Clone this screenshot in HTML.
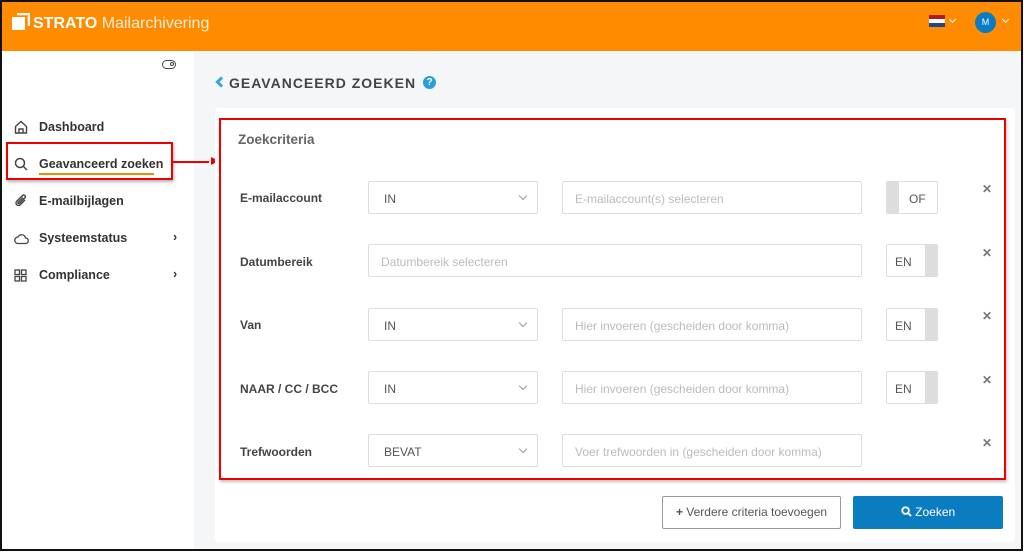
<!DOCTYPE html>
<html><head><meta charset="utf-8"><style>
*{box-sizing:border-box;margin:0;padding:0}
body{width:1024px;height:557px;background:#fff;font-family:"Liberation Sans",sans-serif;position:relative;overflow:hidden}
.frame{position:absolute;left:0;top:0;width:1023px;height:551px;border:2px solid #111;background:#f5f6f8;overflow:hidden}
.hdr{position:absolute;left:0;top:0;right:0;height:49px;background:#ff8c00}
.a{position:absolute}
.side{position:absolute;left:0;top:49px;width:192px;bottom:0;background:#fff}
.nav{position:absolute;left:37px;font-size:12.5px;color:#333;font-weight:bold}
.ic{position:absolute;left:12px}
.card{position:absolute;left:213px;top:106px;width:800px;height:434px;background:#fff;border-radius:4px}
.lab{position:absolute;left:238px;font-size:12px;font-weight:bold;color:#444}
.sel,.inp,.tog{position:absolute;height:33px;border:1px solid #ddd;border-radius:2px;background:#fff;font-size:12px}
.sel{left:366px;width:170px;color:#555;padding:10px 0 0 15px}
.sel:after{content:"";position:absolute;right:11px;top:11px;width:5px;height:5px;border-right:1px solid #999;border-bottom:1px solid #999;transform:rotate(45deg)}
.inp{color:#bbb;padding:10px 0 0 12px}
.tog{left:884px;width:52px;color:#555;overflow:hidden}
.tog .k{position:absolute;top:0;bottom:0;width:12px;background:#ddd}
.tog .t{position:absolute;top:10px}
.x{position:absolute;left:980px;font-size:12px;color:#777;font-weight:bold}
</style></head><body>
<div class="frame">
<div class="hdr">
 <svg class="a" style="left:10px;top:11px" width="18" height="17" viewBox="0 0 18 17"><rect x="0" y="4" width="13" height="13" fill="#fff"/><path d="M5 1h12v12" stroke="#fff" stroke-width="2.5" fill="none"/></svg>
 <div class="a" style="left:31px;top:13px;color:#fff;font-size:16px"><b>STRATO</b> <span style="opacity:.85">Mailarchivering</span></div>
 <div class="a" style="left:927px;top:13px;width:16px;height:12px"><div style="height:4px;background:#ae1c28"></div><div style="height:4px;background:#fff"></div><div style="height:4px;background:#21468b"></div></div>
 <div class="a" style="left:948px;top:15px;width:5px;height:5px;border-right:1.5px solid #fff;border-bottom:1.5px solid #fff;transform:rotate(45deg)"></div>
 <div class="a" style="left:973px;top:10px;width:21px;height:21px;border-radius:50%;background:#0a7cc4;color:#fff;font-size:9px;text-align:center;line-height:21px">M</div>
 <div class="a" style="left:1001px;top:15px;width:5px;height:5px;border-right:1.5px solid #fff;border-bottom:1.5px solid #fff;transform:rotate(45deg)"></div>
</div>
<div class="side">
 <div class="a" style="left:160px;top:9px;width:14px;height:9px;border:1.5px solid #444;border-radius:5px"><div style="position:absolute;right:1px;top:1px;width:4px;height:4px;border:1px solid #444;border-radius:50%"></div></div>
 <svg class="ic" style="top:69px" width="14" height="14" viewBox="0 0 14 14" fill="none" stroke="#444" stroke-width="1.4"><path d="M1.5 6.5L7 1.5l5.5 5V13h-11z"/><path d="M5 13V9h4v4"/></svg>
 <div class="nav" style="top:69px">Dashboard</div>
 <svg class="ic" style="top:106px" width="14" height="14" viewBox="0 0 14 14" fill="none" stroke="#444" stroke-width="1.5"><circle cx="6" cy="6" r="4.5"/><path d="M9.5 9.5L13 13"/></svg>
 <div class="nav" style="top:106px">Geavanceerd zoeken</div>
 <div class="a" style="left:37px;top:122px;width:115px;height:2px;background:#f08c00"></div>
 <div class="a" style="left:4px;top:91px;width:167px;height:38px;border:2px solid #e00;box-shadow:1px 2px 3px rgba(0,0,0,.3)"></div>
 <div class="a" style="left:171px;top:110px;width:36px;height:1.5px;background:#e00"></div>
 <svg class="ic" style="top:143px" width="14" height="14" viewBox="0 0 14 14" fill="none" stroke="#444" stroke-width="1.4"><path d="M11 6L6 11a2.5 2.5 0 01-3.5-3.5l6-6a1.7 1.7 0 012.4 2.4l-5.5 5.5a.8.8 0 01-1.2-1.2L9 3.5"/></svg>
 <div class="nav" style="top:143px">E-mailbijlagen</div>
 <svg class="ic" style="top:181px" width="15" height="13" viewBox="0 0 15 13" fill="none" stroke="#444" stroke-width="1.3"><path d="M4 11.5h7.5a2.8 2.8 0 000-5.6A4 4 0 004 5a3.2 3.2 0 000 6.5z"/></svg>
 <div class="nav" style="top:180px">Systeemstatus</div><div class="nav" style="left:171px;top:179px">›</div>
 <svg class="ic" style="top:218px" width="13" height="13" viewBox="0 0 13 13" fill="none" stroke="#444" stroke-width="1.3"><rect x="1" y="1" width="4.5" height="4.5"/><rect x="7.5" y="1" width="4.5" height="4.5"/><rect x="1" y="7.5" width="4.5" height="4.5"/><rect x="7.5" y="7.5" width="4.5" height="4.5"/></svg>
 <div class="nav" style="top:217px">Compliance</div><div class="nav" style="left:171px;top:216px">›</div>
</div>
<div class="a" style="left:209px;top:155px;width:0;height:0;border-left:8px solid #e00;border-top:4px solid transparent;border-bottom:4px solid transparent"></div>
<div class="a" style="left:215px;top:76px;width:8px;height:8px;border-left:3px solid #3aa8e0;border-bottom:3px solid #3aa8e0;transform:rotate(45deg)"></div>
<div class="a" style="left:227px;top:73px;font-size:14px;font-weight:bold;color:#444;letter-spacing:1px">GEAVANCEERD ZOEKEN</div>
<div class="a" style="left:421px;top:74px;width:13px;height:13px;border-radius:50%;background:#2a9fd8;color:#fff;font-size:10px;font-weight:bold;text-align:center;line-height:13px">?</div>
<div class="card"></div>
<div class="a" style="left:217px;top:116px;width:787px;height:362px;border:2px solid #e00;box-shadow:1px 2px 3px rgba(0,0,0,.25)"></div>
<div class="a" style="left:236px;top:130px;font-size:13.5px;font-weight:bold;color:#666">Zoekcriteria</div>

<div class="lab" style="top:189px">E-mailaccount</div>
<div class="sel" style="top:179px">IN</div>
<div class="inp" style="left:560px;width:300px;top:179px">E-mailaccount(s) selecteren</div>
<div class="tog" style="top:179px"><div class="k" style="left:0"></div><div class="t" style="left:22px">OF</div></div>
<div class="x" style="top:180px">✕</div>

<div class="lab" style="top:253px">Datumbereik</div>
<div class="inp" style="left:366px;width:494px;top:242px">Datumbereik selecteren</div>
<div class="tog" style="top:242px"><div class="k" style="right:0"></div><div class="t" style="left:8px">EN</div></div>
<div class="x" style="top:244px">✕</div>

<div class="lab" style="top:316px">Van</div>
<div class="sel" style="top:306px">IN</div>
<div class="inp" style="left:560px;width:300px;top:306px">Hier invoeren (gescheiden door komma)</div>
<div class="tog" style="top:306px"><div class="k" style="right:0"></div><div class="t" style="left:8px">EN</div></div>
<div class="x" style="top:307px">✕</div>

<div class="lab" style="top:380px">NAAR / CC / BCC</div>
<div class="sel" style="top:369px">IN</div>
<div class="inp" style="left:560px;width:300px;top:369px">Hier invoeren (gescheiden door komma)</div>
<div class="tog" style="top:369px"><div class="k" style="right:0"></div><div class="t" style="left:8px">EN</div></div>
<div class="x" style="top:371px">✕</div>

<div class="lab" style="top:443px">Trefwoorden</div>
<div class="sel" style="top:432px">BEVAT</div>
<div class="inp" style="left:560px;width:300px;top:432px">Voer trefwoorden in (gescheiden door komma)</div>
<div class="x" style="top:434px">✕</div>

<div class="a" style="left:660px;top:494px;width:179px;height:33px;border:1px solid #999;border-radius:2px;background:#fff;font-size:12px;color:#555;text-align:center;line-height:31px"><b>+</b> Verdere criteria toevoegen</div>
<div class="a" style="left:851px;top:494px;width:150px;height:33px;border-radius:2px;background:#0a7cc0;font-size:12px;color:#fff;text-align:center;line-height:33px"><svg width="11" height="11" viewBox="0 0 12 12" style="vertical-align:-1px" fill="none" stroke="#fff" stroke-width="2"><circle cx="5" cy="5" r="3.6"/><path d="M7.7 7.7L11 11"/></svg> Zoeken</div>
</div>
</body></html>
